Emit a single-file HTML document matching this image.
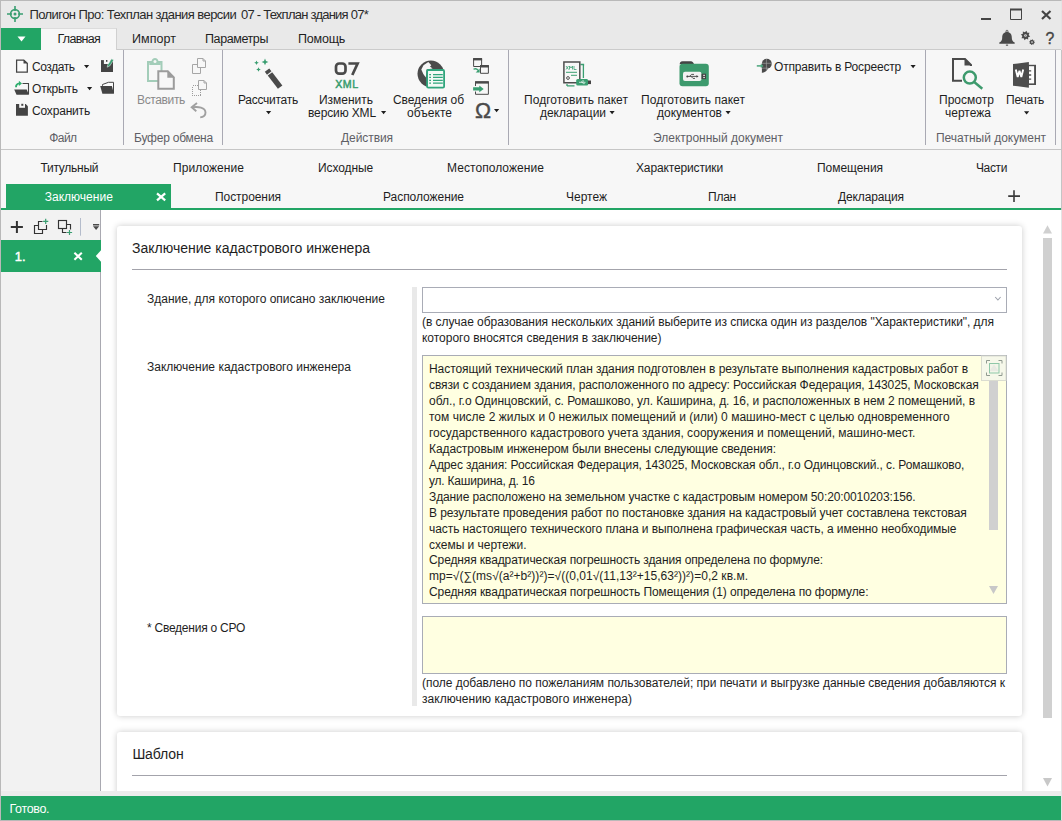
<!DOCTYPE html>
<html><head><meta charset="utf-8"><title>Полигон Про</title>
<style>
*{box-sizing:border-box;margin:0;padding:0}
html,body{width:1062px;height:821px;overflow:hidden}
body{position:relative;background:#fff;font-family:"Liberation Sans",sans-serif;font-size:12px;color:#1e1e1e}
.a{position:absolute}
.t{position:absolute;white-space:pre;font-family:"Liberation Sans",sans-serif}
svg{position:absolute;overflow:visible}
#titlebar{left:0;top:0;width:1062px;height:50px;background:#e9e9e9;border-bottom:1px solid #cbcbcb}
#ribbon{left:1px;top:50px;width:1060px;height:100px;background:#f7f7f7;border-bottom:1px solid #c6c6c6}
#appbtn{left:1px;top:28px;width:40px;height:22px;background:#22a565}
#maintab{left:41px;top:28px;width:76px;height:22px;background:#f7f7f7;border-top:1px solid #dcdcdc;border-right:1px solid #d0d0d0}
.vsep{position:absolute;width:1px;background:#a9a9b3;top:50px;height:95px}
#tabs{left:1px;top:150px;width:1060px;height:58px;background:#f7f7f7}
#gline{left:1px;top:208px;width:1060px;height:2px;background:#22a565}
#acttab{left:6px;top:184px;width:165px;height:24px;background:#22a565}
#left{left:1px;top:210px;width:100px;height:581px;background:#f2f2f2;border-right:1px solid #a9a9b1}
#item{left:1px;top:240px;width:100px;height:32px;background:#22a565}
#content{left:101px;top:210px;width:960px;height:581px;background:#fff;overflow:hidden}
.card{position:absolute;background:#fff;border-radius:3px;box-shadow:0 0 6px rgba(0,0,0,.21)}
#strip{left:1px;top:791px;width:1060px;height:5px;background:#ececec}
#status{left:1px;top:796px;width:1060px;height:24px;background:#22a565}
#frame{left:0;top:0;width:1062px;height:821px;border:1px solid #b9b9b9;border-right-color:#e4e4e4;pointer-events:none}
.hl{position:absolute;height:1px;background:#a3a3ab}
.field{position:absolute;border:1px solid #a9acb6;background:#fff}
.yel{background:#ffffe1}

</style></head>
<body>
<div class="a" id="titlebar"></div>
<div class="a" id="ribbon"></div>
<div class="a" id="appbtn"></div>
<div class="a" id="maintab"></div>
<div class="vsep" style="left:123px"></div>
<div class="vsep" style="left:222px"></div>
<div class="vsep" style="left:508px"></div>
<div class="vsep" style="left:925px"></div>
<div class="vsep" style="left:1055px"></div>
<div class="a" id="tabs"></div>
<div class="a" id="gline"></div>
<div class="a" id="acttab"></div>
<div class="a" id="left"></div>
<div class="a" id="item"></div>
<div class="a" id="content">
  <div class="card" style="left:16px;top:16px;width:905px;height:489.5px"></div>
  <div class="card" style="left:16px;top:522px;width:905px;height:120px"></div>
  <div class="hl" style="left:31px;top:59px;width:875px"></div>
  <div class="hl" style="left:31px;top:565px;width:875px"></div>
  <div class="a" style="left:311px;top:77px;width:5px;height:419px;background:#e9e9e9"></div>
  <div class="field" style="left:321px;top:77px;width:585px;height:26px"></div>
  <div class="field yel" style="left:321px;top:145px;width:585px;height:249px"></div>
  <div class="field yel" style="left:321px;top:406px;width:585px;height:58px"></div>
  <div class="a" style="left:888px;top:168px;width:9px;height:151.500px;background:#d0d0d0"></div>
  <div class="a" style="left:942px;top:28px;width:9px;height:479.5px;background:#d0d0d0"></div>
</div>
<div class="a" id="strip"></div>
<div class="a" id="status"></div>
<div class="a" id="frame"></div>
<div class="a" style="left:1061px;top:50px;width:1px;height:160px;background:#c4c4c4"></div>
<svg class="a" style="left:0;top:0" width="1062" height="821" viewBox="0 0 1062 821">
<!-- app icon crosshair -->
<g stroke="#3a9e71" fill="none" stroke-width="1.6">
<circle cx="15" cy="14" r="4.4"/>
<path d="M15 6v5M15 17v5M7 14h5M18 14h5"/>
</g>
<circle cx="15" cy="14" r="1.5" fill="#3a9e71"/>
<!-- app button triangle -->
<path d="M17.5 36.5h8l-4 5z" fill="#fff"/>
<!-- window buttons -->
<rect x="981" y="18" width="10" height="2" fill="#444"/>
<path d="M1010.5 9.5h11v10h-11z" fill="none" stroke="#444" stroke-width="1"/>
<rect x="1010" y="8.5" width="12" height="2" fill="#444"/>
<path d="M1042 11l8.5 8M1050.500 11l-8.500 8" stroke="#444" stroke-width="2.2" fill="none"/>
<!-- bell -->
<path d="M1007 32.100c-3.100 0-4.800 2.300-4.800 5.400 0 2.500-.7 3.900-2.900 5.100v1.100h15.400v-1.100c-2.200-1.200-2.900-2.600-2.900-5.100 0-3.100-1.700-5.400-4.800-5.400z" fill="#4a4a4a"/>
<rect x="1005.900" y="44.600" width="2.200" height="1.100" fill="#4a4a4a"/>
<circle cx="1007" cy="31.300" r="1.050" fill="none" stroke="#4a4a4a" stroke-width="0.800"/>
<!-- gears -->
<path d="M1026.45 30.80L1027.29 32.85L1029.50 32.85L1028.64 34.89L1030.20 36.45L1028.15 37.29L1028.15 39.50L1026.11 38.64L1024.55 40.20L1023.71 38.15L1021.50 38.15L1022.36 36.11L1020.80 34.55L1022.85 33.71L1022.85 31.50L1024.89 32.36z" fill="#4a4a4a"/>
<circle cx="1025.500" cy="35.500" r="1.350" fill="#d8d8d8"/>
<circle cx="1025.500" cy="35.500" r="0.450" fill="#4a4a4a"/>
<path d="M1032.58 39.36L1033.23 40.38L1034.42 40.60L1034.16 41.78L1034.84 42.78L1033.82 43.43L1033.60 44.62L1032.42 44.36L1031.42 45.04L1030.77 44.02L1029.58 43.80L1029.84 42.62L1029.16 41.62L1030.18 40.97L1030.40 39.78L1031.58 40.04z" fill="#4a4a4a"/>
<circle cx="1032" cy="42.200" r="1.100" fill="#a4a4a4"/>
<!-- ribbon: new doc -->
<path d="M16.600 60h7.200l3.500 3.300v8.700h-10.700z" fill="#fbfbfb" stroke="#444" stroke-width="1.250"/>
<path d="M23.500 59.700v3.800h4z" fill="#444"/>
<!-- save-as -->
<path d="M101 60.100h12v11.900h-12z" fill="#444"/>
<rect x="103.900" y="59.900" width="6.500" height="4.100" fill="#f7f7f7"/>
<rect x="106" y="60" width="1.400" height="1.800" fill="#444"/>
<path d="M107.200 67.200l.6-2.500 3.800-5.900 2 1.300-3.900 5.900z" fill="#3a9e71" stroke="#f7f7f7" stroke-width="0.500"/>
<!-- open -->
<path d="M22.500 83.500h6v10.800" fill="none" stroke="#444" stroke-width="1.100"/>
<path d="M14.200 89.500h12.500l2.200 5.200h-12.400z" fill="#444"/>
<path d="M16 87.300c0-2.300 1.300-3.700 3.600-3.900" fill="none" stroke="#2fae6e" stroke-width="1.900"/>
<path d="M18.900 80.700l3.100 2.700-3.100 2.600z" fill="#2fae6e"/>
<!-- folder2 -->
<path d="M102.500 85.800v-1.300l6-2.200h5v11" fill="#fbfbfb" stroke="#444" stroke-width="1"/>
<path d="M100.200 86h11.700l2 7.800h-11.500z" fill="#444"/>
<!-- save -->
<path d="M16 104h9.700l2.200 2.300v9.500h-11.900z" fill="#444"/>
<rect x="19.200" y="103.800" width="5.800" height="4" fill="#f7f7f7"/>
<rect x="21.300" y="103.800" width="2" height="2" fill="#444"/>
<!-- dropdown arrows -->
<path d="M84 65h5.2l-2.6 3.200z" fill="#1e1e1e"/>
<path d="M87 87h5.2l-2.6 3.200z" fill="#1e1e1e"/>
<path d="M266 111h5.2l-2.6 3.200z" fill="#1e1e1e"/>
<path d="M381 111h5.2l-2.6 3.200z" fill="#1e1e1e"/>
<path d="M494 109h5.2l-2.6 3.200z" fill="#1e1e1e"/>
<path d="M609.5 111h5.2l-2.6 3.200z" fill="#1e1e1e"/>
<path d="M725.5 111h5.2l-2.6 3.200z" fill="#1e1e1e"/>
<path d="M910.5 65h5.2l-2.6 3.200z" fill="#1e1e1e"/>
<path d="M1024 111.3h5.2l-2.6 3.200z" fill="#1e1e1e"/>
<!-- paste -->
<path d="M148 62h13.500v19h-13.500z" fill="none" stroke="#a3cdb9" stroke-width="2"/>
<path d="M149.300 65v-3.400h2.200c.2-2 1.600-3.500 3.500-3.500s3.300 1.500 3.500 3.500h2.200v3.400z" fill="#a3cdb9"/>
<circle cx="155" cy="61.500" r="1.500" fill="#f7f7f7"/>
<path d="M158.300 71.300h9.500l6 6v11.500h-15.500z" fill="#f7f7f7" stroke="#9c9c9c" stroke-width="2"/>
<path d="M167.300 70.500v7.300h7.300z" fill="#9c9c9c"/>
<!-- copy -->
<g fill="#f7f7f7" stroke="#a6a6a6" stroke-width="1">
<path d="M192.500 64.500h8v9h-8z"/>
<path d="M197.500 58.500h5.500l2.500 2.500v6.500h-8z"/>
<path d="M203 58.500v2.500h2.500" fill="none"/>
</g>
<!-- cut (dotted) -->
<path d="M192.500 85.500h8v10h-8z" fill="none" stroke="#9c9c9c" stroke-width="1" stroke-dasharray="1 1" shape-rendering="crispEdges"/>
<g fill="#f7f7f7" stroke="#a6a6a6" stroke-width="1">
<path d="M198.500 80.500h5.500l2.500 2.500v6.500h-8z"/>
<path d="M204 80.500v2.500h2.500" fill="none"/>
</g>
<!-- undo -->
<path d="M192 107.300c6-1 13.500 0 13.500 5.300 0 3-2.300 4.500-5.300 4.800" fill="none" stroke="#a0a0a0" stroke-width="1.900"/>
<path d="M197 103l-5.300 4.200 4.600 4" fill="none" stroke="#a0a0a0" stroke-width="1.900"/>
<!-- wand -->
<g fill="#3a9e71">
<path d="M265 58.500l1 2.400 2.400 1-2.400 1-1 2.400-1-2.400-2.400-1 2.400-1z"/>
<path d="M256.500 60.500l.7 1.600 1.600.7-1.600.7-.7 1.600-.7-1.600-1.600-.7 1.600-.7z"/>
<path d="M258.500 67.200l.7 1.600 1.600.7-1.600.7-.7 1.600-.7-1.600-1.600-.7 1.600-.7z"/>
</g>
<g transform="translate(267.050 70.100) rotate(52.500)">
<rect x="0" y="-2.800" width="3.600" height="5.600" fill="#4a4a4a"/>
<rect x="4.800" y="-2.800" width="16.700" height="5.600" fill="#4a4a4a"/>
</g>
<!-- 07 XML -->
<g fill="none" stroke="#4a4a4a" stroke-width="2.700" stroke-linejoin="round">
<rect x="336" y="63.500" width="9.500" height="10.200" rx="3.200"/>
<path d="M348.400 63.500h9.200l-5.300 11.500" stroke-linejoin="miter"/>
</g>
<!-- globe -->
<circle cx="430.800" cy="73.800" r="13.300" fill="#4a4a4a"/>
<path d="M428.300 62l3 3.200-1.300 1.300 2.600 2.100-6 1-.8 8-2.500-3.600-2-4.500 2.200-4.300z" fill="#f7f7f7"/>
<rect x="427.100" y="70" width="17" height="17.600" rx="1.200" fill="#f1f9f5" stroke="#2fa57c" stroke-width="1.800"/>
<g stroke="#2fa57c" stroke-width="1.300">
<path d="M429.200 74.600h1.800M433 74.600h9.800M429.200 77.400h1.800M433 77.400h9.800M429.200 80.300h1.800M433 80.300h9.800M429.200 83.100h1.800M433 83.100h9.800"/>
</g>
<!-- small icon A -->
<g fill="#f7f7f7" stroke="#4a4a4a" stroke-width="1">
<path d="M473.600 59v7.500h8v-7.500z"/>
<path d="M480.500 66v7.300h7.900v-7.300z"/>
</g>
<rect x="473.100" y="58" width="9" height="2.400" fill="#4a4a4a"/>
<rect x="480" y="65" width="8.900" height="2.500" fill="#4a4a4a"/>
<path d="M473.500 69.300c1.500-.8 3.500-.5 4.500 1" fill="none" stroke="#3a9e71" stroke-width="1.300"/>
<path d="M479.700 68.500v4h-4z" fill="#3a9e71"/>
<!-- small icon B -->
<path d="M475.500 86v-4h12.900v12.300h-12.900v-2.800" fill="none" stroke="#4a4a4a" stroke-width="1"/>
<rect x="475" y="81.200" width="13.900" height="2.400" fill="#4a4a4a"/>
<path d="M473.100 87.200h6.200v-1.700l4.400 3.400-4.400 3.400v-1.700h-6.200z" fill="#3a9e71"/>
<!-- decl icon -->
<path d="M567 85.800h7.500M583.400 65v13" fill="none" stroke="#3a9e71" stroke-width="1.300"/>
<path d="M580.500 64.500h3v1M567 84v2" fill="none" stroke="#3a9e71" stroke-width="1.300"/>
<path d="M563.900 62h15.900v20.800h-15.900z" fill="#f7f7f7" stroke="#4d4d4d" stroke-width="1.500"/>
<path d="M566 72.300h11M571 75.300h6" stroke="#3a9e71" stroke-width="1"/>
<path d="M566 66l2.500 3.500M568.500 66l-2.500 3.500M569.500 69.500v-3.500l1.500 2 1.500-2v3.500M574 66v3.500h2.500" stroke="#3a9e71" stroke-width="0.800" fill="none"/>
<circle cx="568" cy="78" r="1.400" fill="none" stroke="#555" stroke-width="1"/>
<rect x="576.200" y="79" width="12" height="6.600" rx="1.500" fill="#3a9e71"/>
<rect x="588" y="80.500" width="3" height="3.600" fill="#444"/>
<path d="M579 82.300h6.500M581 82.300l1.500-1.300h1.500M582 82.300l1.500 1.300h1.200" stroke="#fff" stroke-width="0.700" fill="none"/>
<!-- folder usb -->
<path d="M679.500 66c0-3.500 1-4.800 3-4.800h8.500c1.500 0 2 .8 3 2.800h-14.500z" fill="#444"/>
<rect x="679.500" y="63.800" width="29.300" height="22.500" rx="3" fill="#3d9a6d"/>
<rect x="683" y="71.700" width="18.500" height="9.300" rx="2" fill="#f2f2f2"/>
<rect x="701.500" y="73.700" width="4.500" height="5.400" fill="#444"/>
<rect x="703.300" y="74.800" width="1.500" height="1.200" fill="#f2f2f2"/><rect x="703.300" y="76.900" width="1.500" height="1.200" fill="#f2f2f2"/>
<path d="M687 76.400h10M689.500 76.400l2-2h2.500M691 76.400l2 2h2" stroke="#444" stroke-width="0.900" fill="none"/>
<path d="M696.500 75l2 1.400-2 1.400z" fill="#444"/><circle cx="687.300" cy="76.400" r="1" fill="#444"/>
<!-- rosreestr -->
<circle cx="766.800" cy="63.800" r="4.950" fill="#4a4a4a"/>
<path d="M761.900 63.800v9.100c3.200-.5 5.600-2.300 6.100-5.200z" fill="#4a4a4a"/>
<path d="M766.400 58.800v11.500M761.800 63.300h10M761.800 68.200h6.500" stroke="#a8a8a8" stroke-width="0.600"/>
<path d="M756.800 65.900h5" stroke="#4aa57b" stroke-width="1.500"/>
<path d="M760.800 63.700l2.800 2.200-2.800 2.200z" fill="#4aa57b"/>
<!-- preview -->
<path d="M971 66v-1l-6-6h-12v21.800h9" fill="none" stroke="#4a4a4a" stroke-width="2"/>
<path d="M964.500 58.500v7h7z" fill="#4a4a4a"/>
<circle cx="969.800" cy="77.600" r="6" fill="none" stroke="#3d9a6d" stroke-width="2.500"/>
<path d="M974.500 82.300l7.800 6.500" stroke="#3d9a6d" stroke-width="2.500"/>
<!-- word -->
<rect x="1028" y="64.800" width="8" height="20.200" fill="#4d4d4d"/>
<rect x="1029" y="66.200" width="5.100" height="17.200" fill="#fbfbfb"/>
<path d="M1028.500 70.900h2.700M1028.500 75h2.700M1028.500 79.100h2.700" stroke="#4d4d4d" stroke-width="1.400"/>
<path d="M1013 64l15.900-1.900v25.600l-15.900-2z" fill="#4d4d4d"/>
<path d="M1015.800 69.500l1.900 7.600 1.800-6.300 1.800 6.300 1.900-7.600" fill="none" stroke="#fff" stroke-width="1.900" stroke-linejoin="miter" stroke-miterlimit="2"/>
<!-- active tab X -->
<path d="M157 193.400l8.200 7M165.200 193.400l-8.200 7" stroke="#fff" stroke-width="2.200" fill="none"/>
<!-- plus tab -->
<path d="M1014 190.300v11.600M1008.200 196.100h11.800" stroke="#3a3a3a" stroke-width="1.600" fill="none"/>
<!-- left toolbar -->
<path d="M16.900 221v11.900M10.800 227h12.100" stroke="#333" stroke-width="2" fill="none"/>
<g fill="none" stroke="#333" stroke-width="1.150">
<path d="M38.500 225.500h-4v8h8v-4"/>
<path d="M42.500 221.500h-4v8h8v-4.500"/>
<rect x="58.500" y="220.500" width="8" height="8"/>
<path d="M67 224.500h3.500v5M66.500 232.500h-4v-3.500"/>
</g>
<path d="M45.700 218.800v5.200M43.100 221.400h5.200M69.500 229.900v5.200M66.900 232.500h5.200" stroke="#3a9e71" stroke-width="1.200" fill="none"/>
<path d="M80.500 218v17.700" stroke="#b4bccb" stroke-width="1"/>
<path d="M93 224h6.200v1.500h-6.200zM93 226.200h6.200l-3.100 3.700z" fill="#4a4a4a"/>
<!-- item x and notch -->
<path d="M74.400 252.800l7.400 6.900M81.800 252.800l-7.400 6.900" stroke="#fff" stroke-width="2.100" fill="none"/>
<path d="M101 250.300v11.400l-5.200-5.700z" fill="#fff"/>
<!-- combobox chevron -->
<path d="M995.200 297l2.700 3 2.700-3" fill="none" stroke="#9da1ab" stroke-width="1.100"/>
<!-- textarea icon -->
<rect x="981.500" y="356" width="24.500" height="24.500" fill="#f6f8ea" stroke="#dadcd0" stroke-width="1"/>
<path d="M989.500 371h9l-4.500-6.500z" fill="#dcdcdc"/>
<g fill="none" stroke="#909a90" stroke-width="1">
<path d="M986.500 363.500v-3h3.500M998.500 360.500h3.500v3M1002 372.500v3h-3.500M990 375.500h-3.500v-3"/>
</g>
<rect x="989.500" y="363.500" width="9.500" height="9.500" fill="rgba(240,244,232,.6)" stroke="#8fc8a8" stroke-width="1"/>
<!-- inner scroll arrow -->
<path d="M989 586h9l-4.500 8z" fill="#c8c8c8"/>
<!-- main scroll arrows -->
<path d="M1043 233.600h9l-4.500-8.300z" fill="#d0d0d0"/>
<path d="M1043 778h9l-4.500 8.500z" fill="#c8c8c8"/>
</svg>

<span class="t" style="left:29.4px;top:6px;font-size:13px;line-height:18px;letter-spacing:-0.558px;color:#2a2a2a;">Полигон Про: Техплан здания версии</span>
<span class="t" style="left:241px;top:6px;font-size:13px;line-height:18px;letter-spacing:-0.757px;color:#2a2a2a;">07 - Техплан здания 07*</span>
<span class="t" style="left:57.5px;top:30px;font-size:12.5px;line-height:18px;letter-spacing:-0.725px;color:#1e1e1e;">Главная</span>
<span class="t" style="left:132px;top:30px;font-size:12.5px;line-height:18px;letter-spacing:0.049px;color:#1e1e1e;">Импорт</span>
<span class="t" style="left:205px;top:30px;font-size:12.5px;line-height:18px;letter-spacing:-0.405px;color:#1e1e1e;">Параметры</span>
<span class="t" style="left:298px;top:30px;font-size:12.5px;line-height:18px;letter-spacing:-0.214px;color:#1e1e1e;">Помощь</span>
<span class="t" style="left:32px;top:59px;font-size:12px;line-height:17px;letter-spacing:-0.416px;color:#1e1e1e;">Создать</span>
<span class="t" style="left:32px;top:81px;font-size:12px;line-height:17px;letter-spacing:-0.206px;color:#1e1e1e;">Открыть</span>
<span class="t" style="left:32px;top:103px;font-size:12px;line-height:17px;letter-spacing:-0.182px;color:#1e1e1e;">Сохранить</span>
<span class="t" style="left:49.3px;top:130px;font-size:12px;line-height:17px;letter-spacing:-0.579px;color:#5f5f66;">Файл</span>
<span class="t" style="left:134px;top:130px;font-size:12px;line-height:17px;letter-spacing:-0.212px;color:#5f5f66;">Буфер обмена</span>
<span class="t" style="left:341px;top:130px;font-size:12px;line-height:17px;letter-spacing:-0.072px;color:#5f5f66;">Действия</span>
<span class="t" style="left:653px;top:130px;font-size:12px;line-height:17px;letter-spacing:-0.002px;color:#5f5f66;">Электронный документ</span>
<span class="t" style="left:936px;top:130px;font-size:12px;line-height:17px;letter-spacing:-0.019px;color:#5f5f66;">Печатный документ</span>
<span class="t" style="left:137px;top:92px;font-size:12px;line-height:17px;letter-spacing:-0.359px;color:#8a8a8a;">Вставить</span>
<span class="t" style="left:238px;top:92px;font-size:12px;line-height:17px;letter-spacing:-0.263px;color:#1e1e1e;">Рассчитать</span>
<span class="t" style="left:319px;top:92px;font-size:12px;line-height:17px;letter-spacing:-0.018px;color:#1e1e1e;">Изменить</span>
<span class="t" style="left:308px;top:105px;font-size:12px;line-height:17px;letter-spacing:-0.131px;color:#1e1e1e;">версию XML</span>
<span class="t" style="left:393px;top:92px;font-size:12px;line-height:17px;letter-spacing:-0.064px;color:#1e1e1e;">Сведения об</span>
<span class="t" style="left:407px;top:105px;font-size:12px;line-height:17px;letter-spacing:0.036px;color:#1e1e1e;">объекте</span>
<span class="t" style="left:524px;top:92px;font-size:12px;line-height:17px;letter-spacing:0.053px;color:#1e1e1e;">Подготовить пакет</span>
<span class="t" style="left:540px;top:105px;font-size:12px;line-height:17px;letter-spacing:-0.037px;color:#1e1e1e;">декларации</span>
<span class="t" style="left:641px;top:92px;font-size:12px;line-height:17px;letter-spacing:0.053px;color:#1e1e1e;">Подготовить пакет</span>
<span class="t" style="left:657px;top:105px;font-size:12px;line-height:17px;letter-spacing:0.011px;color:#1e1e1e;">документов</span>
<span class="t" style="left:774px;top:59px;font-size:12px;line-height:17px;letter-spacing:-0.185px;color:#1e1e1e;">Отправить в Росреестр</span>
<span class="t" style="left:939px;top:92px;font-size:12px;line-height:17px;letter-spacing:0.023px;color:#1e1e1e;">Просмотр</span>
<span class="t" style="left:945px;top:105px;font-size:12px;line-height:17px;letter-spacing:0.009px;color:#1e1e1e;">чертежа</span>
<span class="t" style="left:1006px;top:92px;font-size:12px;line-height:17px;letter-spacing:-0.219px;color:#1e1e1e;">Печать</span>
<span class="t" style="left:40.4px;top:160px;font-size:12px;line-height:17px;letter-spacing:-0.244px;color:#1e1e1e;">Титульный</span>
<span class="t" style="left:173px;top:160px;font-size:12px;line-height:17px;letter-spacing:0.061px;color:#1e1e1e;">Приложение</span>
<span class="t" style="left:318px;top:160px;font-size:12px;line-height:17px;letter-spacing:-0.104px;color:#1e1e1e;">Исходные</span>
<span class="t" style="left:447px;top:160px;font-size:12px;line-height:17px;letter-spacing:0.061px;color:#1e1e1e;">Местоположение</span>
<span class="t" style="left:636px;top:160px;font-size:12px;line-height:17px;letter-spacing:-0.142px;color:#1e1e1e;">Характеристики</span>
<span class="t" style="left:817px;top:160px;font-size:12px;line-height:17px;letter-spacing:-0.052px;color:#1e1e1e;">Помещения</span>
<span class="t" style="left:976px;top:160px;font-size:12px;line-height:17px;letter-spacing:-0.375px;color:#1e1e1e;">Части</span>
<span class="t" style="left:44.7px;top:189px;font-size:12px;line-height:17px;letter-spacing:0.022px;color:#fff;">Заключение</span>
<span class="t" style="left:215px;top:189px;font-size:12px;line-height:17px;letter-spacing:-0.066px;color:#1e1e1e;">Построения</span>
<span class="t" style="left:383px;top:189px;font-size:12px;line-height:17px;letter-spacing:-0.048px;color:#1e1e1e;">Расположение</span>
<span class="t" style="left:566px;top:189px;font-size:12px;line-height:17px;letter-spacing:-0.003px;color:#1e1e1e;">Чертеж</span>
<span class="t" style="left:708px;top:189px;font-size:12px;line-height:17px;letter-spacing:-0.234px;color:#1e1e1e;">План</span>
<span class="t" style="left:838px;top:189px;font-size:12px;line-height:17px;letter-spacing:-0.130px;color:#1e1e1e;">Декларация</span>
<span class="t" style="left:14.8px;top:248px;font-size:13px;line-height:18px;letter-spacing:0.000px;color:#fff;-webkit-text-stroke:0.45px #fff;">1.</span>
<span class="t" style="left:132px;top:238px;font-size:14px;line-height:20px;letter-spacing:0.010px;color:#1e1e1e;">Заключение кадастрового инженера</span>
<span class="t" style="left:132.4px;top:744px;font-size:14px;line-height:20px;letter-spacing:-0.110px;color:#1e1e1e;">Шаблон</span>
<span class="t" style="left:147px;top:291px;font-size:12px;line-height:17px;letter-spacing:-0.004px;color:#1e1e1e;">Здание, для которого описано заключение</span>
<span class="t" style="left:422px;top:314px;font-size:12px;line-height:17px;letter-spacing:-0.056px;color:#1e1e1e;">(в случае образования нескольких зданий выберите из списка один из разделов "Характеристики", для</span>
<span class="t" style="left:422px;top:330px;font-size:12px;line-height:17px;letter-spacing:-0.015px;color:#1e1e1e;">которого вносятся сведения в заключение)</span>
<span class="t" style="left:147px;top:359px;font-size:12px;line-height:17px;letter-spacing:0.008px;color:#1e1e1e;">Заключение кадастрового инженера</span>
<span class="t" style="left:429px;top:361px;font-size:12px;line-height:17px;letter-spacing:-0.062px;color:#1e1e1e;">Настоящий технический план здания подготовлен в результате выполнения кадастровых работ в</span>
<span class="t" style="left:429px;top:377px;font-size:12px;line-height:17px;letter-spacing:-0.096px;color:#1e1e1e;">связи с созданием здания, расположенного по адресу: Российская Федерация, 143025, Московская</span>
<span class="t" style="left:429px;top:393px;font-size:12px;line-height:17px;letter-spacing:-0.044px;color:#1e1e1e;">обл., г.о Одинцовский, с. Ромашково, ул. Каширина, д. 16, и расположенных в нем 2 помещений, в</span>
<span class="t" style="left:429px;top:409px;font-size:12px;line-height:17px;letter-spacing:0.006px;color:#1e1e1e;">том числе 2 жилых и 0 нежилых помещений и (или) 0 машино-мест с целью одновременного</span>
<span class="t" style="left:429px;top:425px;font-size:12px;line-height:17px;letter-spacing:-0.003px;color:#1e1e1e;">государственного кадастрового учета здания, сооружения и помещений, машино-мест.</span>
<span class="t" style="left:429px;top:441px;font-size:12px;line-height:17px;letter-spacing:-0.093px;color:#1e1e1e;">Кадастровым инженером были внесены следующие сведения:</span>
<span class="t" style="left:429px;top:457px;font-size:12px;line-height:17px;letter-spacing:-0.111px;color:#1e1e1e;">Адрес здания: Российская Федерация, 143025, Московская обл., г.о Одинцовский., с. Ромашково,</span>
<span class="t" style="left:429px;top:473px;font-size:12px;line-height:17px;letter-spacing:-0.214px;color:#1e1e1e;">ул. Каширина, д. 16</span>
<span class="t" style="left:429px;top:489px;font-size:12px;line-height:17px;letter-spacing:-0.108px;color:#1e1e1e;">Здание расположено на земельном участке с кадастровым номером 50:20:0010203:156.</span>
<span class="t" style="left:429px;top:505px;font-size:12px;line-height:17px;letter-spacing:-0.097px;color:#1e1e1e;">В результате проведения работ по постановке здания на кадастровый учет составлена текстовая</span>
<span class="t" style="left:429px;top:521px;font-size:12px;line-height:17px;letter-spacing:-0.073px;color:#1e1e1e;">часть настоящего технического плана и выполнена графическая часть, а именно необходимые</span>
<span class="t" style="left:429px;top:537px;font-size:12px;line-height:17px;letter-spacing:-0.031px;color:#1e1e1e;">схемы и чертежи.</span>
<span class="t" style="left:429px;top:552px;font-size:12px;line-height:17px;letter-spacing:-0.106px;color:#1e1e1e;">Средняя квадратическая погрешность здания определена по формуле:</span>
<span class="t" style="left:429px;top:568px;font-size:12px;line-height:17px;letter-spacing:0.037px;color:#1e1e1e;">mp=√(∑(ms√(a²+b²))²)=√((0,01√(11,13²+15,63²))²)=0,2 кв.м.</span>
<span class="t" style="left:429px;top:584px;font-size:12px;line-height:17px;letter-spacing:-0.100px;color:#1e1e1e;">Средняя квадратическая погрешность Помещения (1) определена по формуле:</span>
<span class="t" style="left:147px;top:620px;font-size:12px;line-height:17px;letter-spacing:-0.244px;color:#1e1e1e;">* Сведения о СРО</span>
<span class="t" style="left:422px;top:675px;font-size:12px;line-height:17px;letter-spacing:-0.027px;color:#1e1e1e;">(поле добавлено по пожеланиям пользователей; при печати и выгрузке данные сведения добавляются к</span>
<span class="t" style="left:422px;top:691px;font-size:12px;line-height:17px;letter-spacing:0.051px;color:#1e1e1e;">заключению кадастрового инженера)</span>
<span class="t" style="left:9.4px;top:800px;font-size:12.5px;line-height:18px;letter-spacing:-0.311px;color:#fff;">Готово.</span>
<span class="t" style="left:335.2px;top:77px;font-size:10.6px;line-height:15px;letter-spacing:0.534px;color:#3a9e71;-webkit-text-stroke:0.5px #3a9e71;">XML</span>
<span class="t" style="left:1045.4px;top:28px;font-size:15.8px;line-height:22px;letter-spacing:0.000px;color:#444;-webkit-text-stroke:0.35px #444;">?</span>
<span class="t" style="left:475px;top:96px;font-size:21.5px;line-height:30px;letter-spacing:-0.078px;color:#4a4a4a;-webkit-text-stroke:0.4px #4a4a4a;">Ω</span>
</body></html>
